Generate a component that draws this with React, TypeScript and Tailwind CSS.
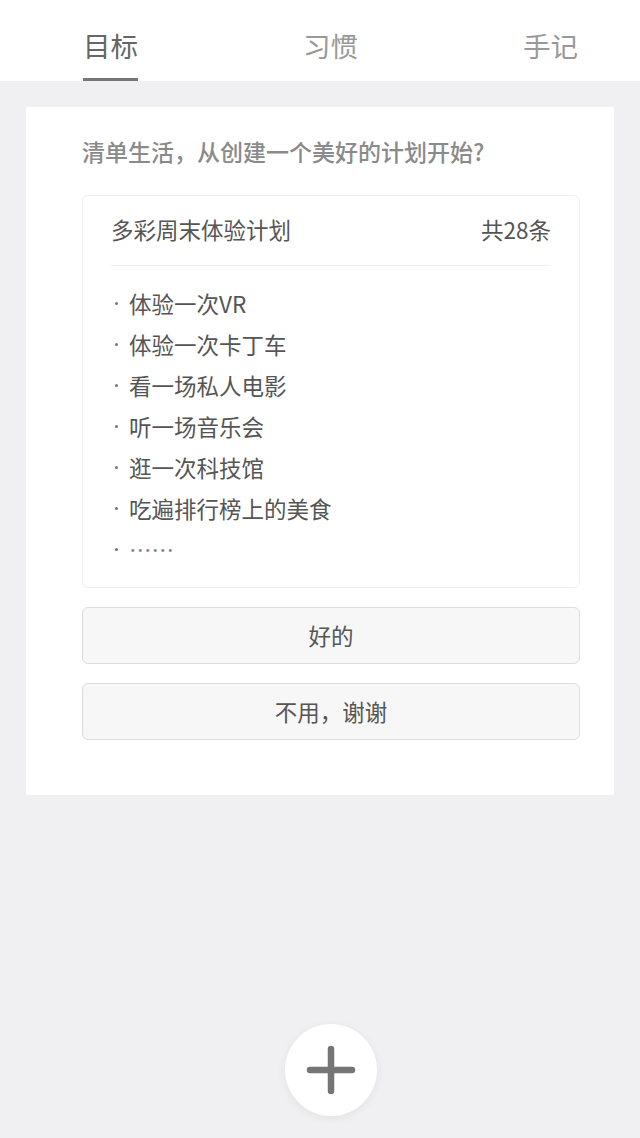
const tabs = ['目标', '习惯', '手记'];

const items = ['体验一次VR', '体验一次卡丁车', '看一场私人电影', '听一场音乐会', '逛一次科技馆', '吃遍排行榜上的美食', '……'];

export default function App() {
  return (
    <div
      className="relative min-h-[1138px] bg-[#f0f0f2]"
      style={{ fontFamily: '"Noto Sans CJK SC", "Noto Sans", sans-serif' }}
    >
      {/* tabs */}
      <div className="flex h-[81px] justify-between bg-white pl-[83px] pr-[62px]">
        {tabs.map((t, i) => (
          <div key={t} className="flex flex-col items-stretch pt-[30px]">
            <span className={`text-[27.5px] leading-[30px] ${i === 0 ? 'text-[#666]' : 'text-[#999]'}`}>{t}</span>
            {i === 0 && <div className="mt-[18px] h-[3px] bg-[#777]" />}
          </div>
        ))}
      </div>

      {/* card */}
      <div className="mx-[26px] mt-[26px] bg-white pb-[55px] pl-[56px] pr-[34px] pt-[28px]">
        <p className="text-[23px] font-medium leading-[33px] text-[#8a8a8a]">清单生活，从创建一个美好的计划开始?</p>

        <div className="mt-[27px] rounded-[6px] border border-[#eeeeee] px-[28px] pb-[17px] pt-[17px]">
          <div className="flex items-center justify-between text-[22.5px] leading-[33px] text-[#555]">
            <span>多彩周末体验计划</span>
            <span>共28条</span>
          </div>
          <div className="mt-[19px] h-px bg-[#f0f0f0]" />
          <ul className="mt-[17px]">
            {items.map((it) => (
              <li key={it} className="flex items-center text-[22.5px] leading-[41px] text-[#555]">
                <span className="ml-[4px] mr-[11px] h-[3px] w-[3px] rounded-full bg-[#777]" />
                <span className={it === '……' ? 'text-[#888]' : ''}>{it}</span>
              </li>
            ))}
          </ul>
        </div>

        <button className="mt-[19px] flex h-[57px] w-full items-center justify-center rounded-[6px] border border-[#dddddd] bg-[#f7f7f7] text-[22.5px] text-[#555]">
          好的
        </button>
        <button className="mt-[19px] flex h-[57px] w-full items-center justify-center rounded-[6px] border border-[#dddddd] bg-[#f7f7f7] text-[22.5px] text-[#555]">
          不用，谢谢
        </button>
      </div>

      {/* add button */}
      <button className="absolute left-[285px] top-[1024px] flex h-[92px] w-[92px] items-center justify-center rounded-full bg-white shadow-[0_2px_10px_rgba(0,0,0,0.06)]">
        <svg width="50" height="50" viewBox="0 0 50 50">
          <path d="M25 4v42M4 25h42" stroke="#757575" strokeWidth="6.5" strokeLinecap="round" />
        </svg>
      </button>
    </div>
  );
}
